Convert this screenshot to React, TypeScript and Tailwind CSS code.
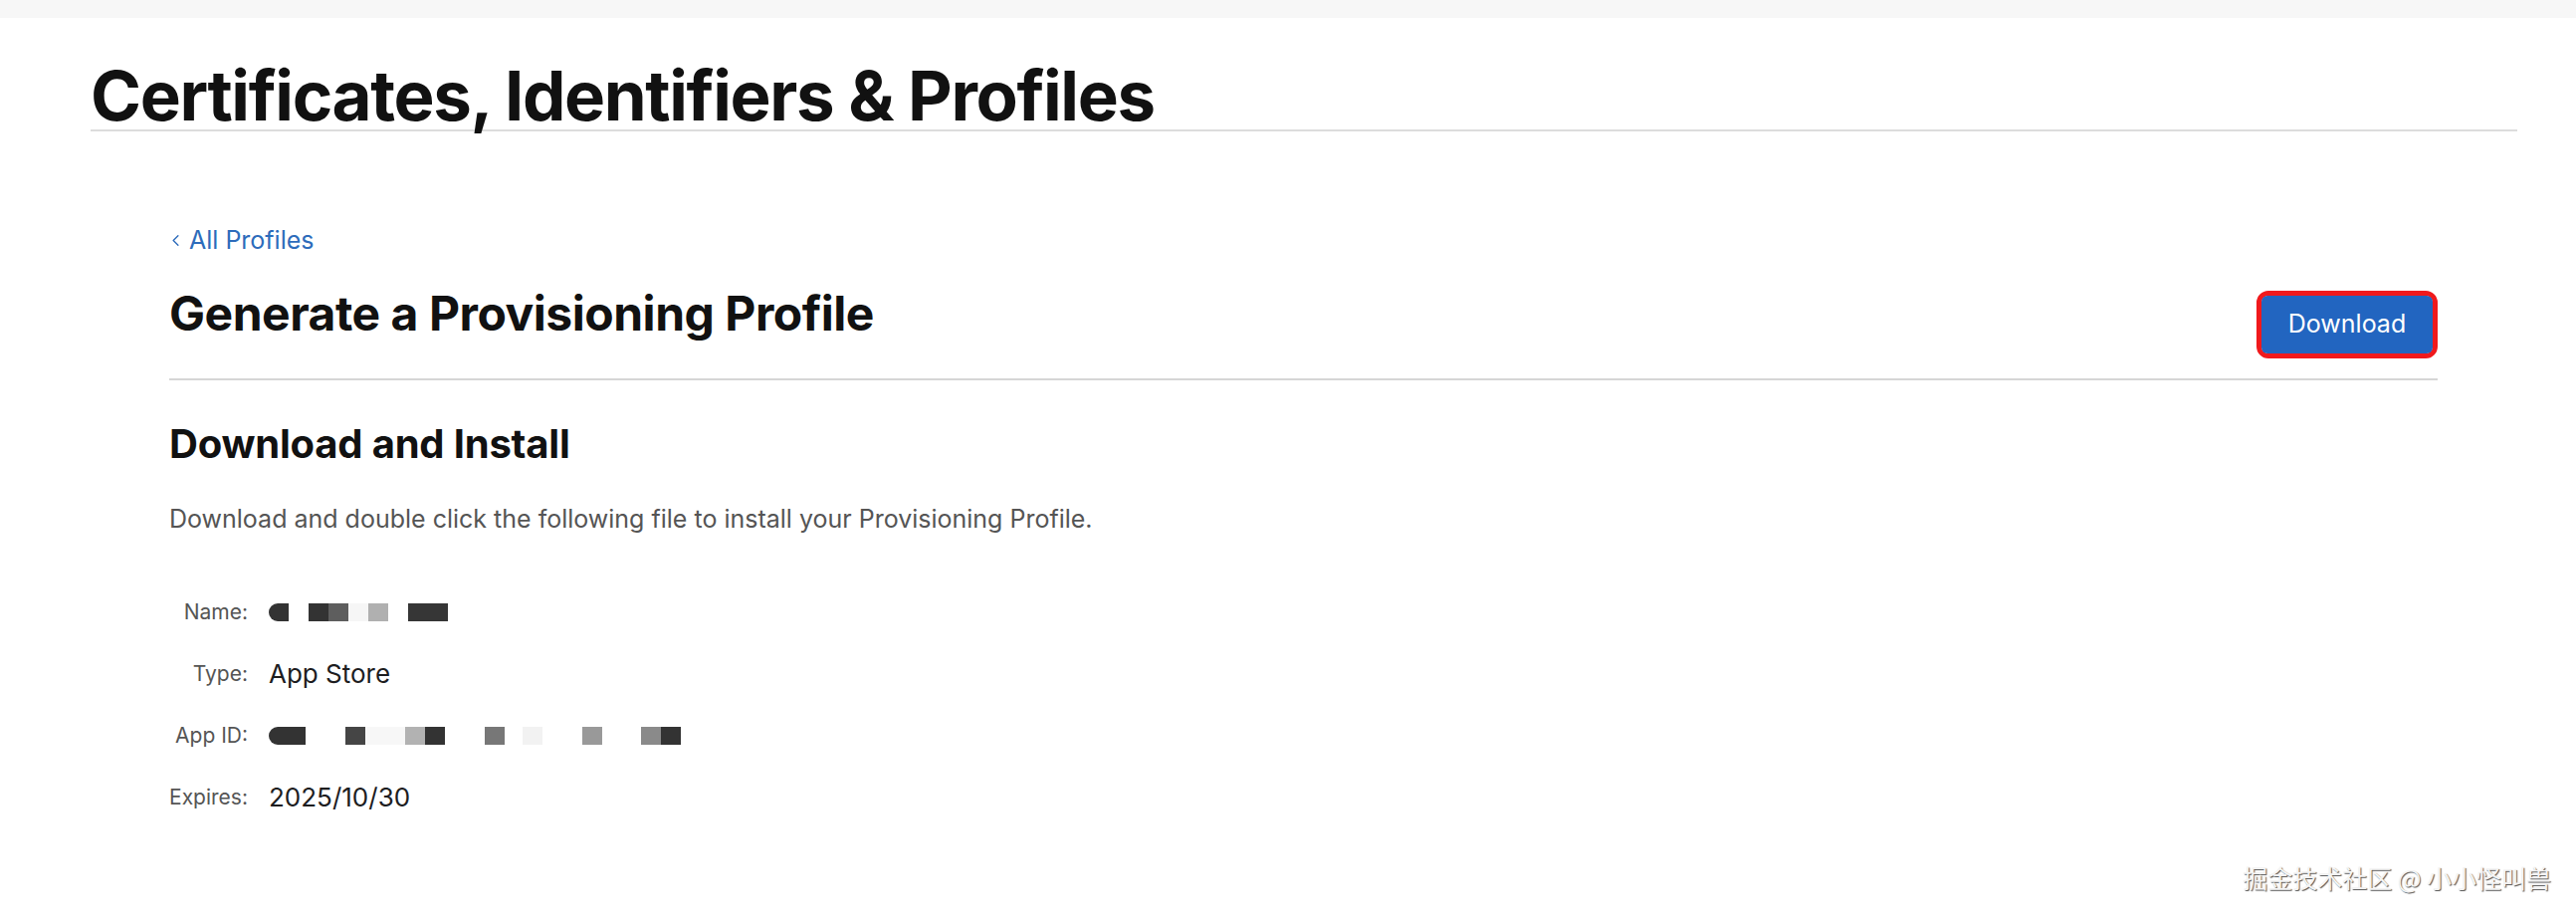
import { ChevronLeft } from "lucide-react";

const Page = () => {
  return (
    <div className="w-[2588px] min-h-[922px] bg-white font-['Inter','Liberation_Sans',sans-serif] text-[#1d1d1f]">
      {/* top global bar */}
      <div className="h-[18px] bg-[#f7f7f7]" />

      {/* Page title */}
      <div className="pl-[91px] pr-[59px]">
        <h1 className="h-[114px] pt-[38px] text-[69px] leading-[80px] font-bold tracking-[-0.02em] text-[#111] border-b-2 border-[#dcdcdc]">
          Certificates, Identifiers &amp; Profiles
        </h1>
      </div>

      {/* Content */}
      <div className="pl-[170px] pr-[139px] pt-[94px]">
        <a className="flex items-center gap-[4px] text-[25px] leading-[30px] text-[#2d6cbb]">
          <ChevronLeft className="w-[19px] h-[19px] -ml-[3px]" strokeWidth={1.75} />
          All Profiles
        </a>

        {/* header row */}
        <div className="flex items-start justify-between mt-[30px] pb-[20px] border-b-2 border-[#d6d6d6]">
          <h2 className="text-[48px] leading-[58px] font-bold tracking-[-0.01em] text-[#111]">
            Generate a Provisioning Profile
          </h2>
          <div className="mt-[6px] rounded-[12px] border-[5px] border-[#f0191c]">
            <button className="w-[172px] h-[58px] rounded-[6px] bg-[#2265c0] text-white text-[25px]">
              Download
            </button>
          </div>
        </div>

        <h3 className="mt-[40px] text-[40px] leading-[48px] font-bold tracking-[-0.005em] text-[#111]">
          Download and Install
        </h3>
        <p className="mt-[35px] text-[25px] leading-[32px] text-[#555]">
          Download and double click the following file to install your Provisioning Profile.
        </p>

        {/* profile details */}
        <div className="mt-[62px] flex flex-col gap-[30.5px]">
          <div className="flex items-center gap-[21px]">
            <span className="w-[79px] text-right text-[21px] text-[#555] whitespace-nowrap">Name:</span>
            <div className="flex items-center h-[30px]">
              <span className="w-[20px] h-[18px] bg-[#333] rounded-l-full" />
              <span className="w-[20px] h-[18px]" />
              <span className="w-[20px] h-[18px] bg-[#333]" />
              <span className="w-[20px] h-[18px] bg-[#5e5e5e]" />
              <span className="w-[20px] h-[18px] bg-[#f6f6f6]" />
              <span className="w-[20px] h-[18px] bg-[#b0b0b0]" />
              <span className="w-[20px] h-[18px]" />
              <span className="w-[40px] h-[18px] bg-[#363636]" />
            </div>
          </div>
          <div className="flex items-center gap-[21px]">
            <span className="w-[79px] text-right text-[21px] text-[#555] whitespace-nowrap">Type:</span>
            <span className="text-[26px] leading-[30px] text-[#1d1d1f]">App Store</span>
          </div>
          <div className="flex items-center gap-[21px]">
            <span className="w-[79px] text-right text-[21px] text-[#555] whitespace-nowrap">App ID:</span>
            <div className="flex items-center h-[30px]">
              <span className="w-[37px] h-[18px] bg-[#333] rounded-l-[10px]" />
              <span className="w-[40px] h-[18px]" />
              <span className="w-[20px] h-[18px] bg-[#454545]" />
              <span className="w-[40px] h-[18px] bg-[#f7f7f7]" />
              <span className="w-[20px] h-[18px] bg-[#b2b2b2]" />
              <span className="w-[20px] h-[18px] bg-[#333]" />
              <span className="w-[40px] h-[18px]" />
              <span className="w-[20px] h-[18px] bg-[#777]" />
              <span className="w-[18px] h-[18px]" />
              <span className="w-[20px] h-[18px] bg-[#f2f2f2]" />
              <span className="w-[40px] h-[18px]" />
              <span className="w-[20px] h-[18px] bg-[#999]" />
              <span className="w-[39px] h-[18px]" />
              <span className="w-[20px] h-[18px] bg-[#8a8a8a]" />
              <span className="w-[20px] h-[18px] bg-[#333]" />
            </div>
          </div>
          <div className="flex items-center gap-[21px]">
            <span className="w-[79px] text-right text-[21px] text-[#555] whitespace-nowrap">Expires:</span>
            <span className="text-[26px] leading-[30px] text-[#1d1d1f]">2025/10/30</span>
          </div>
        </div>
      </div>

      {/* watermark */}
      <div className="flex justify-end pr-[25px] mt-[46px]">
        <span className="text-[25px] leading-[36px] text-[#f4f4f4] font-['Noto_Sans_CJK_SC',sans-serif] [text-shadow:1px_1px_1px_#555]">
          掘金技术社区 @ 小小怪叫兽
        </span>
      </div>
    </div>
  );
};

export default function App() {
  return <Page />;
}
